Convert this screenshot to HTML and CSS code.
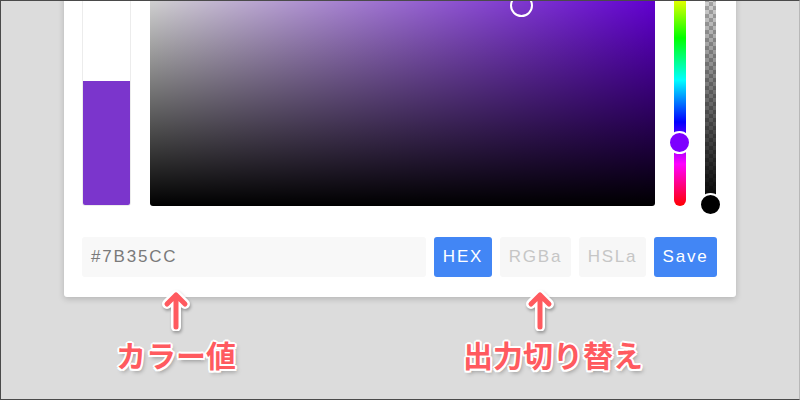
FILE: index.html
```html
<!DOCTYPE html>
<html lang="ja">
<head>
<meta charset="utf-8">
<link rel="stylesheet" href="styles.css">
</head>
<body>
<div class="frame">
  <div class="card">
    <div class="top">
      <div class="preview"><div class="swatch"></div></div>
      <div class="sv"><span class="sv-thumb"></span></div>
      <div class="hue"><span class="thumb hue-thumb"></span></div>
      <div class="alpha"><span class="thumb alpha-thumb"></span></div>
    </div>
    <div class="bar">
      <div class="value">#7B35CC</div>
      <div class="btn active w-hex">HEX</div>
      <div class="btn w-rgba">RGBa</div>
      <div class="btn w-hsla">HSLa</div>
      <div class="btn active w-save">Save</div>
    </div>
  </div>
  <div class="note note-value">
    <svg class="arrow" width="30" height="42" viewBox="0 0 30 42"><g fill="none" stroke-linecap="round" stroke-linejoin="round"><path d="M15 38V6M6 15l9-9 9 9" stroke="#fff" stroke-width="10"/><path d="M15 38V6M6 15l9-9 9 9" stroke="#ff5a5f" stroke-width="5"/></g></svg>
    <div class="label">カラー値</div>
  </div>
  <div class="note note-output">
    <svg class="arrow" width="30" height="42" viewBox="0 0 30 42"><g fill="none" stroke-linecap="round" stroke-linejoin="round"><path d="M15 38V6M6 15l9-9 9 9" stroke="#fff" stroke-width="10"/><path d="M15 38V6M6 15l9-9 9 9" stroke="#ff5a5f" stroke-width="5"/></g></svg>
    <div class="label">出力切り替え</div>
  </div>
</div>
</body>
</html>
```

FILE: styles.css
```css
html, body {
  margin: 0;
  padding: 0;
  width: 800px;
  height: 400px;
  overflow: hidden;
}
.frame {
  position: relative;
  box-sizing: border-box;
  width: 800px;
  height: 400px;
  overflow: hidden;
  background: #dcdcdc;
  border: 1px solid #4a4a4a;
  border-right-color: #b8b8b8;
  font-family: "Liberation Sans", Arial, sans-serif;
}
.card {
  margin: -65px 0 0 63px;
  width: 672px;
  box-sizing: border-box;
  padding: 18px 19px 20px 18px;
  background: #fff;
  border-radius: 0 0 3px 3px;
  box-shadow: 0 2px 6px rgba(0,0,0,0.18);
  display: flex;
  flex-direction: column;
  gap: 31px;
}
.top {
  display: flex;
  height: 252px;
  gap: 19px;
}
.preview {
  width: 49px;
  box-sizing: border-box;
  border: 1px solid #ececec;
  border-radius: 0 0 3px 3px;
  background: #fff;
  display: flex;
  flex-direction: column;
  justify-content: flex-end;
  overflow: hidden;
}
.swatch {
  height: 125px;
  margin: 0 -1px -1px;
  background: #7b35cc;
  border-radius: 0 0 3px 3px;
}
.sv {
  position: relative;
  width: 505px;
  border-radius: 0 0 3px 3px;
  background:
    linear-gradient(to top, #000, rgba(0,0,0,0)),
    linear-gradient(to right, #fff, hsl(268, 100%, 50%));
}
.sv-thumb {
  position: absolute;
  left: 360px;
  top: 40px;
  width: 19px;
  height: 19px;
  border: 2.5px solid #fff;
  border-radius: 50%;
}
.hue {
  position: relative;
  width: 12px;
  border-radius: 6px;
  background: linear-gradient(to top, #f00 0%, #f0f 16.67%, #00f 33.33%, #0ff 50%, #0f0 66.67%, #ff0 83.33%, #f00 100%);
}
.alpha {
  position: relative;
  width: 11px;
  background:
    linear-gradient(to bottom, rgba(0,0,0,0), #000),
    repeating-conic-gradient(#c8c8c8 0 25%, #fff 0 50%) 0 0 / 8px 8px;
}
.thumb {
  position: absolute;
  width: 19px;
  height: 19px;
  border: 2px solid #fff;
  border-radius: 50%;
}
.hue-thumb {
  left: -6.5px;
  top: 177px;
  background: #7d00ff;
}
.alpha-thumb {
  left: -6.5px;
  top: 239px;
  background: #000;
}
.bar {
  display: flex;
  height: 40px;
  gap: 8px;
}
.value, .btn {
  display: flex;
  align-items: center;
  font-size: 17px;
  letter-spacing: 1.8px;
  border-radius: 3px;
}
.value {
  flex: 1;
  box-sizing: border-box;
  padding-left: 9px;
  background: #f8f8f8;
  color: #7a7a7a;
}
.btn {
  flex: none;
  justify-content: center;
  background: #f7f7f7;
  color: #c6c6c6;
}
.w-hex { width: 58px; }
.w-rgba { width: 71px; }
.w-hsla { width: 67px; }
.w-save { width: 63px; }
.btn.active {
  background: #4286f5;
  color: #fff;
}
.note {
  position: absolute;
  display: flex;
  flex-direction: column;
  align-items: center;
}
.arrow {
  filter: drop-shadow(1px 2px 1.5px rgba(0,0,0,0.3));
}
.label {
  margin-top: 5px;
  font-family: "Noto Sans CJK JP", sans-serif;
  font-weight: 700;
  font-size: 30px;
  line-height: 36px;
  color: #ff5a5f;
  text-shadow:
    2px 0 0 #fff, -2px 0 0 #fff, 0 2px 0 #fff, 0 -2px 0 #fff,
    1.5px 1.5px 0 #fff, -1.5px 1.5px 0 #fff, 1.5px -1.5px 0 #fff, -1.5px -1.5px 0 #fff,
    2px 3px 4px rgba(0,0,0,0.35);
}
.note-value {
  left: 114px;
  top: 288px;
  width: 122px;
}
.note-output {
  left: 462px;
  top: 288px;
  width: 180px;
}
.note-output .arrow {
  margin-right: 26px;
}
```
